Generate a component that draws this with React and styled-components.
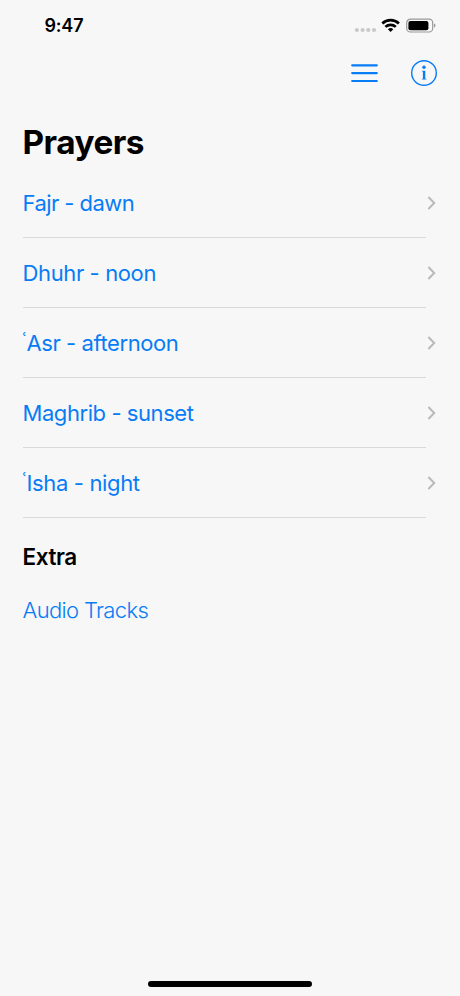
import React from "react";
import styled, { createGlobalStyle } from "styled-components";

const GlobalStyle = createGlobalStyle`
  * {
    box-sizing: border-box;
  }

  body {
    margin: 0;
    background: #f7f7f7;
    font-family: Inter, "Liberation Sans", sans-serif;
  }
`;

const Screen = styled.div`
  width: 460px;
  height: 996px;
  display: flex;
  flex-direction: column;
  overflow: hidden;
  background: #f7f7f7;
`;

const StatusBar = styled.div`
  height: 51px;
  flex: none;
  display: flex;
  align-items: center;
  justify-content: space-between;
  padding: 0 24px 0 44.5px;
`;

const Time = styled.span`
  font-size: 18px;
  font-weight: 600;
  letter-spacing: ${(props) => props.$tracking}px;
  color: #000;
`;

const Toolbar = styled.nav`
  height: 44px;
  flex: none;
  display: flex;
  align-items: center;
  justify-content: flex-end;
  gap: 32px;
  padding-right: 22px;
`;

const IconButton = styled.button`
  display: flex;
  padding: 0;
  border: none;
  background: none;
  color: #087cf5;
`;

const Content = styled.main`
  flex: 1;
  padding: 24px 23px 0 22.5px;
`;

const Title = styled.h1`
  height: 49px;
  margin: 0;
  font-size: 33.3px;
  font-weight: 700;
  line-height: 46px;
  letter-spacing: ${(props) => props.$tracking}px;
  color: #000;
`;

const List = styled.ul`
  margin: 0;
  padding: 0;
  list-style: none;
`;

const Row = styled.li`
  height: 70px;
  display: grid;
  grid-template-columns: 1fr 10px;
  grid-template-rows: 69px 1px;
  align-items: center;
`;

const Label = styled.a`
  font-size: 22px;
  font-weight: ${(props) => props.$weight || 400};
  line-height: 30px;
  letter-spacing: ${(props) => props.$tracking}px;
  white-space: nowrap;
  color: #087cf5;
`;

const Ayn = styled.span`
  display: inline-block;
  width: 4px;
  font-family: "Noto Sans", sans-serif;
  font-size: 20px;
  line-height: 0;
  letter-spacing: 0;
  vertical-align: 3px;
`;

const Divider = styled.div`
  grid-column: 1 / -1;
  height: 1px;
  margin-right: 11px;
  background: #d8d9d9;
`;

const Subtitle = styled.h2`
  margin: 24px 0 23px;
  font-size: 22.5px;
  font-weight: 600;
  line-height: 30px;
  letter-spacing: ${(props) => props.$tracking}px;
  color: #000;
`;

const HomeBar = styled.div`
  width: 164px;
  height: 6px;
  flex: none;
  margin: 0 auto 9px;
  border-radius: 3px;
  background: #000;
`;

const prayers = [
  { name: "Fajr - dawn", tracking: -0.55 },
  { name: "Dhuhr - noon", tracking: -0.38 },
  { name: "Asr - afternoon", tracking: -0.42, ayn: true },
  { name: "Maghrib - sunset", tracking: -0.43 },
  { name: "Isha - night", tracking: -0.35, ayn: true },
];

// cellular dots, wifi and battery
const StatusIcons = () => (
  <svg width="83" height="20" viewBox="0 0 83 20">
    <g fill="#c9c9c9">
      <circle cx="3.9" cy="14" r="2.1" />
      <circle cx="9.6" cy="14" r="2.1" />
      <circle cx="15.3" cy="14" r="2.1" />
      <circle cx="21" cy="14" r="2.1" />
    </g>
    <g fill="none" stroke="#000" strokeWidth="2.7">
      <path d="M29.3 7.5a12 12 0 0 1 16.6 0" />
      <path d="M32.4 10.9a7.5 7.5 0 0 1 10.4 0" />
    </g>
    <path d="M37.6 16l-2.7-2.8a4 4 0 0 1 5.4 0z" fill="#000" />
    <rect x="53.7" y="3.2" width="26" height="12.8" rx="3.6" fill="none" stroke="#999" strokeWidth="1.2" />
    <rect x="55.4" y="5" width="20" height="9.2" rx="2" fill="#000" />
    <path d="M81 7.6v4q1.5-.6 1.5-2t-1.5-2z" fill="#999" />
  </svg>
);

const MenuIcon = () => (
  <svg width="28" height="26" viewBox="0 0 28 26" stroke="currentColor" strokeWidth="2.2" strokeLinecap="round">
    <path d="M2.2 5.3h24.6M2.2 13.1h24.6M2.2 21h24.6" />
  </svg>
);

const InfoIcon = () => (
  <svg width="28" height="28" viewBox="0 0 28 28">
    <circle cx="14" cy="14" r="12.3" fill="none" stroke="currentColor" strokeWidth="1.4" />
    <circle cx="14" cy="8.3" r="1.7" fill="currentColor" />
    <path d="M11.9 11.7h3.4v8h1v.9h-4.5v-.9h1.1v-7.1h-1z" fill="currentColor" />
  </svg>
);

const Chevron = () => (
  <svg width="10" height="16" viewBox="0 0 10 16" fill="none" stroke="#b9b9b9" strokeWidth="2">
    <path d="M1.4 2l5.8 6-5.8 6" />
  </svg>
);

const App = () => {
  return (
    <>
      <GlobalStyle />
      <Screen>
        <StatusBar>
          <Time $tracking={-0.2}>9:47</Time>
          <StatusIcons />
        </StatusBar>
        <Toolbar>
          <IconButton aria-label="Menu">
            <MenuIcon />
          </IconButton>
          <IconButton aria-label="Info">
            <InfoIcon />
          </IconButton>
        </Toolbar>
        <Content>
          <Title $tracking={-0.5}>Prayers</Title>
          <List>
            {prayers.map(({ name, tracking, ayn }) => (
              <Row key={name}>
                <Label $tracking={tracking}>
                  {ayn && <Ayn>ʿ</Ayn>}
                  {name}
                </Label>
                <Chevron />
                <Divider />
              </Row>
            ))}
          </List>
          <Subtitle $tracking={-0.4}>Extra</Subtitle>
          <Label $weight={300} $tracking={-0.65}>
            Audio Tracks
          </Label>
        </Content>
        <HomeBar />
      </Screen>
    </>
  );
};

export default App;
